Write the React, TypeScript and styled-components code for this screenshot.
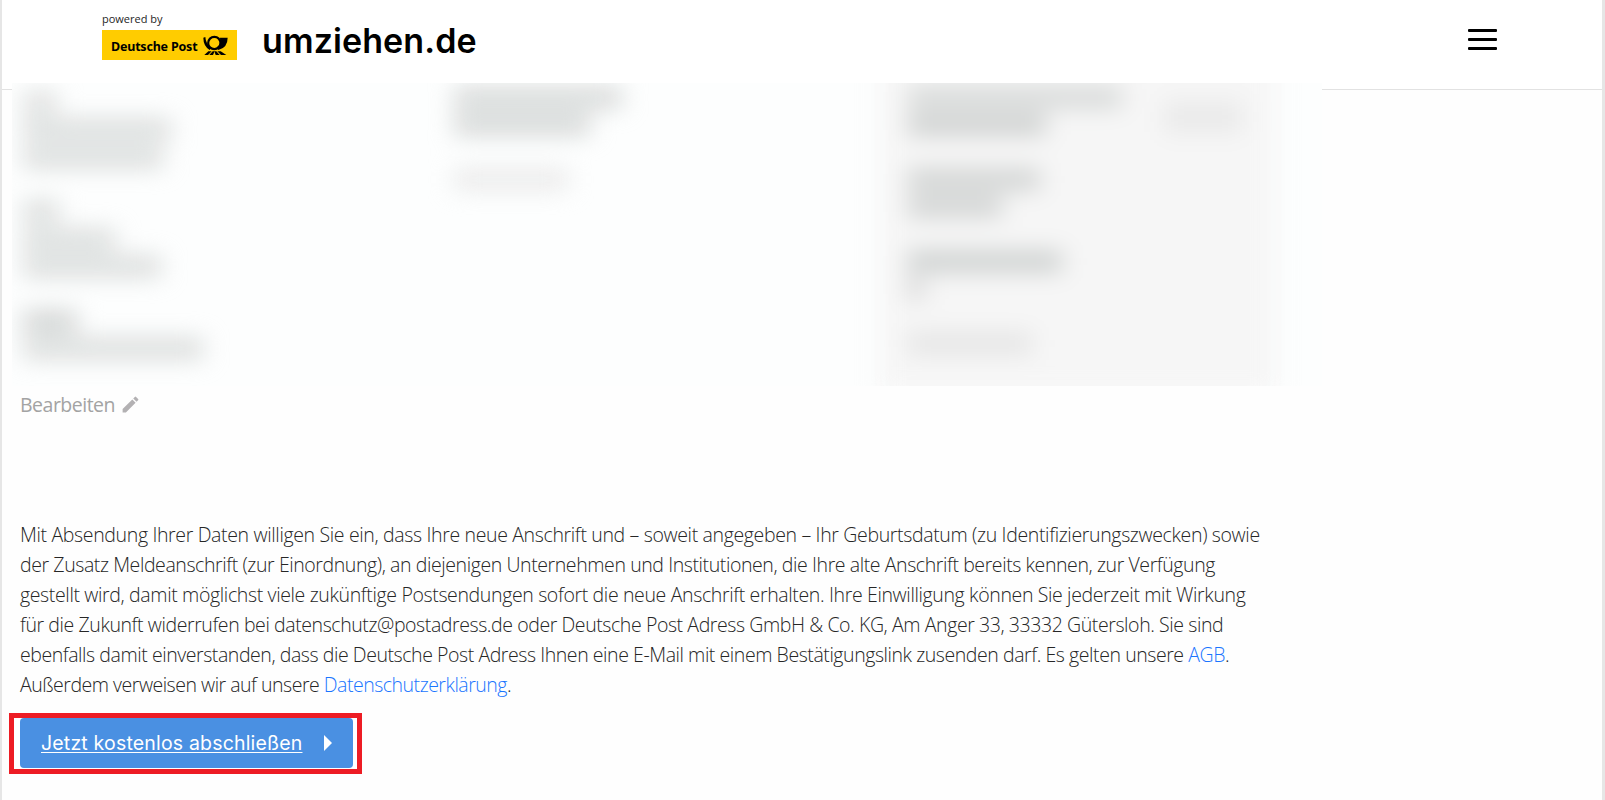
import React from 'react';
import styled, { createGlobalStyle } from 'styled-components';
import { MdEdit } from 'react-icons/md';

type Linha = { largura: number; tom?: string };

const VAZIA: Linha = { largura: 0 };

const pessoa: Linha[] = [
    { largura: 34, tom: '#d6d8d7' },
    { largura: 148 },
    { largura: 140 },
    VAZIA,
    { largura: 36 },
    { largura: 92 },
    { largura: 138 },
    VAZIA,
    { largura: 54, tom: '#c6c9c8' },
    { largura: 180 },
];

const alteAnschrift: Linha[] = [
    { largura: 168, tom: '#cdd0cf' },
    { largura: 136, tom: '#cbcecd' },
    VAZIA,
    { largura: 114, tom: '#e6e6e6' },
];

const neueAnschrift: Linha[] = [
    { largura: 214, tom: '#cfd2d1' },
    { largura: 138, tom: '#c4c7c6' },
    VAZIA,
    { largura: 132, tom: '#c8cbca' },
    { largura: 94, tom: '#c8cbca' },
    VAZIA,
    { largura: 154, tom: '#c3c7c6' },
    { largura: 16, tom: '#ccc' },
    VAZIA,
    { largura: 124, tom: '#e0e0e0' },
];

const GlobalStyle = createGlobalStyle`
    * {
        box-sizing: border-box;
    }

    body {
        margin: 0;
        background: #fefefe;
        overflow: hidden;
    }
`;

const Page = styled.div`
    height: 800px;
    border-left: 2px solid #e6e6e6;
    border-right: 3px solid #e6e6e6;
    font-family: 'Open Sans', 'Noto Sans', sans-serif;
    color: #262626;
`;

const Header = styled.header`
    display: flex;
    justify-content: space-between;
    height: 90px;
    padding: 0 105px 0 100px;
    border-bottom: 1px solid #e2e2e2;
    background: #fff;
`;

const Brand = styled.div`
    display: flex;
    gap: 25px;
`;

const PoweredBy = styled.div`
    padding-top: 10px;
    font-size: 11px;
    line-height: 18px;
`;

const PostLogo = styled.div`
    display: flex;
    align-items: center;
    justify-content: space-between;
    width: 135px;
    height: 30px;
    margin-top: 2px;
    padding: 0 9px;
    background: #fc0;
    color: #000;
    font-family: 'Noto Sans', sans-serif;
    font-size: 12.5px;
    font-weight: 700;
    letter-spacing: -0.2px;
    white-space: nowrap;
`;

const PostName = styled.span`
    padding-top: 2px;
`;

const SiteName = styled.div`
    padding-top: 21px;
    color: #000;
    font-family: Inter, sans-serif;
    font-size: 34px;
    font-weight: 600;
    line-height: 40px;
    letter-spacing: 0.1px;
`;

const MenuButton = styled.button`
    display: flex;
    flex-direction: column;
    gap: 6px;
    width: 29px;
    margin-top: 29px;
    padding: 0;
    border: none;
    background: none;
`;

const MenuBar = styled.span`
    height: 3px;
    border-radius: 1px;
    background: #000;
`;

const Summary = styled.section`
    position: relative;
    display: flex;
    width: 1310px;
    height: 303px;
    margin: -7px 0 0 10px;
    overflow: hidden;
    background: #fdfefe;
`;

const Column = styled.div<{ $width: number; $top: number; $left: number; $panel?: boolean }>`
    display: flex;
    justify-content: space-between;
    flex: none;
    width: ${({ $width }) => $width}px;
    height: 343px;
    margin-top: -30px;
    padding: ${({ $top }) => $top + 30}px 34px 0 ${({ $left }) => $left}px;
    background: ${({ $panel }) => ($panel ? '#f6f6f6' : 'transparent')};
    filter: blur(12px);
`;

const Line = styled.div`
    display: flex;
    align-items: center;
    height: 27.3px;
`;

const Smudge = styled.div<{ $width: number; $tone?: string }>`
    width: ${({ $width }) => $width}px;
    height: 17px;
    background: ${({ $tone }) => $tone || '#d2d5d4'};
`;

const Badge = styled.div`
    width: 78px;
    height: 30px;
    margin-top: 18px;
    background: #e9e9e9;
`;

const EditLink = styled.a`
    display: flex;
    align-items: center;
    gap: 5px;
    height: 30px;
    margin: 3px 0 0 18px;
    color: #a3a3a3;
    font-size: 19.5px;
    letter-spacing: -0.5px;

    svg {
        color: #b3b1b3;
    }
`;

const Consent = styled.p`
    margin: 101px 0 0 18px;
    font-size: 19.5px;
    font-weight: 300;
    line-height: 30px;
    white-space: nowrap;
`;

const ConsentLine = styled.span<{ $spacing: number }>`
    display: block;
    letter-spacing: ${({ $spacing }) => $spacing}px;
`;

const TextLink = styled.a`
    color: #1a75ff;
`;

const Highlight = styled.div`
    width: 353px;
    height: 61px;
    margin: 13px 0 0 7px;
    padding-left: 6px;
    border: 5px solid #ed1c24;
    background: #fff;
`;

const SubmitButton = styled.button`
    display: flex;
    align-items: center;
    justify-content: space-between;
    width: 333px;
    height: 50px;
    padding: 0 21px;
    border: none;
    border-radius: 4px;
    background: #4a90e2;
    color: #fff;
    font-family: Inter, sans-serif;
    font-size: 19.5px;
    letter-spacing: 0.18px;
    text-decoration: underline;
    text-decoration-thickness: 1px;
    text-underline-offset: 2px;
    white-space: nowrap;
`;

const PostHorn = () => (
    <svg width="25" height="21" viewBox="337 103 75 63">
        <circle cx="371" cy="127" r="18.5" fill="none" stroke="#000" strokeWidth="6.5" />
        <path d="M338 111 L344 109 Q345 129 362 142 L357 148 Q338 136 338 111Z" />
        <path d="M388 111 H411 Q411 141 383 148 L378 140 Q391 132 388 111Z" />
        <path d="M341 163 L353 152 H363 L352 163Z" />
        <path d="M356 163 L366 152 H372 L367 163Z" />
        <path d="M375 163 L371 152 H377 L387 163Z" />
        <path d="M391 163 L380 152 H390 L407 163Z" />
    </svg>
);

const Arrow = () => (
    <svg width="8" height="16" viewBox="0 0 8 16">
        <path d="M0 0 L8 8 L0 16Z" fill="#fff" />
    </svg>
);

const Lines = ({ lines }: { lines: Linha[] }) => (
    <div>
        {lines.map((line, index) => (
            <Line key={index}>
                <Smudge $width={line.largura} $tone={line.tom} />
            </Line>
        ))}
    </div>
);

const App: React.FC = () => {
    return (
        <Page>
            <GlobalStyle />
            <Header>
                <Brand>
                    <div>
                        <PoweredBy>powered by</PoweredBy>
                        <PostLogo>
                            <PostName>Deutsche Post</PostName>
                            <PostHorn />
                        </PostLogo>
                    </div>
                    <SiteName>umziehen.de</SiteName>
                </Brand>
                <MenuButton aria-label="Menü">
                    <MenuBar />
                    <MenuBar />
                    <MenuBar />
                </MenuButton>
            </Header>

            <Summary>
                <Column $width={430} $top={6} $left={11}>
                    <Lines lines={pessoa} />
                </Column>
                <Column $width={438} $top={1} $left={12}>
                    <Lines lines={alteAnschrift} />
                </Column>
                <Column $width={396} $top={1} $left={28} $panel>
                    <Lines lines={neueAnschrift} />
                    <Badge />
                </Column>
            </Summary>

            <EditLink>
                Bearbeiten
                <MdEdit size={21} />
            </EditLink>

            <Consent>
                <ConsentLine $spacing={-0.35}>
                    Mit Absendung Ihrer Daten willigen Sie ein, dass Ihre neue Anschrift und – soweit angegeben – Ihr Geburtsdatum (zu Identifizierungszwecken) sowie
                </ConsentLine>
                <ConsentLine $spacing={-0.41}>
                    der Zusatz Meldeanschrift (zur Einordnung), an diejenigen Unternehmen und Institutionen, die Ihre alte Anschrift bereits kennen, zur Verfügung
                </ConsentLine>
                <ConsentLine $spacing={-0.36}>
                    gestellt wird, damit möglichst viele zukünftige Postsendungen sofort die neue Anschrift erhalten. Ihre Einwilligung können Sie jederzeit mit Wirkung
                </ConsentLine>
                <ConsentLine $spacing={-0.415}>
                    für die Zukunft widerrufen bei datenschutz@postadress.de oder Deutsche Post Adress GmbH &amp; Co. KG, Am Anger 33, 33332 Gütersloh. Sie sind
                </ConsentLine>
                <ConsentLine $spacing={-0.435}>
                    ebenfalls damit einverstanden, dass die Deutsche Post Adress Ihnen eine E-Mail mit einem Bestätigungslink zusenden darf. Es gelten unsere <TextLink>AGB</TextLink>.
                </ConsentLine>
                <ConsentLine $spacing={-0.49}>
                    Außerdem verweisen wir auf unsere <TextLink>Datenschutzerklärung</TextLink>.
                </ConsentLine>
            </Consent>

            <Highlight>
                <SubmitButton>
                    Jetzt kostenlos abschließen
                    <Arrow />
                </SubmitButton>
            </Highlight>
        </Page>
    );
};

export default App;
